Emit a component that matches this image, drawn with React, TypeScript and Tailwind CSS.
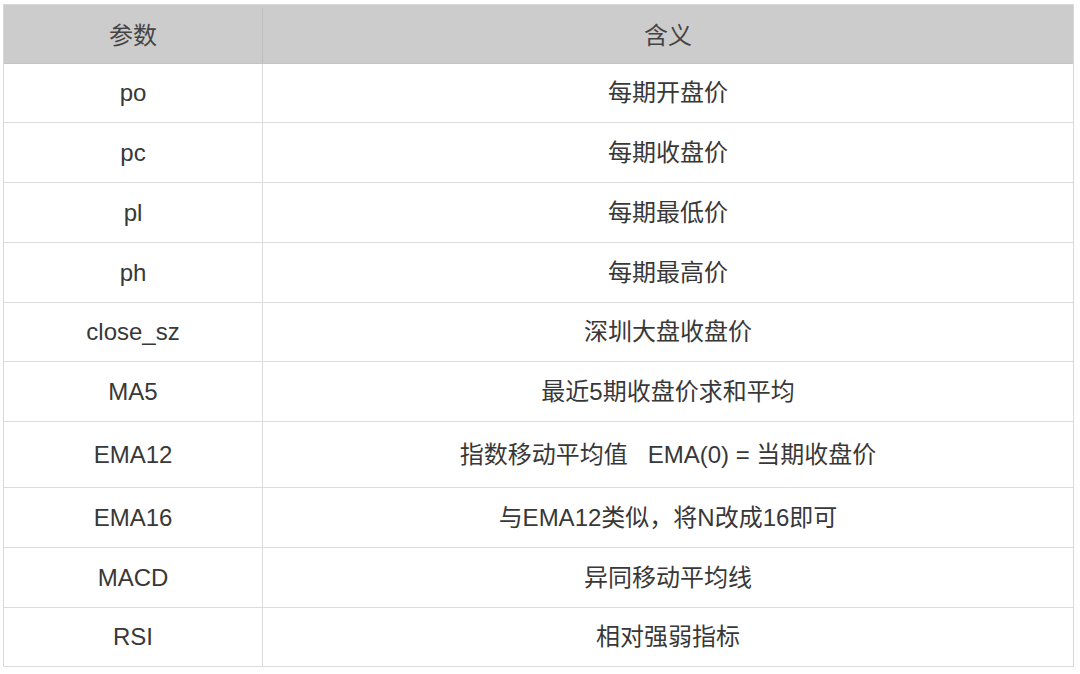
import React from "react";

const rows: { p: string; m: string; h: string }[] = [
  { p: "po", m: "每期开盘价", h: "h-[59px]" },
  { p: "pc", m: "每期收盘价", h: "h-[60px]" },
  { p: "pl", m: "每期最低价", h: "h-[60px]" },
  { p: "ph", m: "每期最高价", h: "h-[60px]" },
  { p: "close_sz", m: "深圳大盘收盘价", h: "h-[59px]" },
  { p: "MA5", m: "最近5期收盘价求和平均", h: "h-[60px]" },
  { p: "EMA12", m: "指数移动平均值   EMA(0) = 当期收盘价", h: "h-[66px]" },
  { p: "EMA16", m: "与EMA12类似，将N改成16即可", h: "h-[60px]" },
  { p: "MACD", m: "异同移动平均线", h: "h-[60px]" },
  { p: "RSI", m: "相对强弱指标", h: "h-[59px]" },
];

export default function App() {
  return (
    <div
      className="w-[1080px] h-[674px] bg-white pt-[4px] pl-[3px]"
      style={{ fontFamily: '"Liberation Sans", "Noto Sans CJK SC", sans-serif' }}
    >
      <div className="w-[1071px] border-l border-t border-r border-[#d8d8d8] text-[24px] text-[#383838]">
        <div className="flex h-[59px] bg-[#cccccc] border-b border-[#c4c4c4] pt-[3px]">
          <div className="w-[259px] flex items-center justify-center border-r border-[#bdbdbd] text-[#444]">参数</div>
          <div className="flex-1 flex items-center justify-center text-[#444]">含义</div>
        </div>
        {rows.map((r) => (
          <div key={r.p} className={`flex border-b border-[#dcdcdc] ${r.h}`}>
            <div className="w-[259px] flex items-center justify-center border-r border-[#dcdcdc]">{r.p}</div>
            <div className="flex-1 flex items-center justify-center whitespace-pre">{r.m}</div>
          </div>
        ))}
      </div>
    </div>
  );
}
